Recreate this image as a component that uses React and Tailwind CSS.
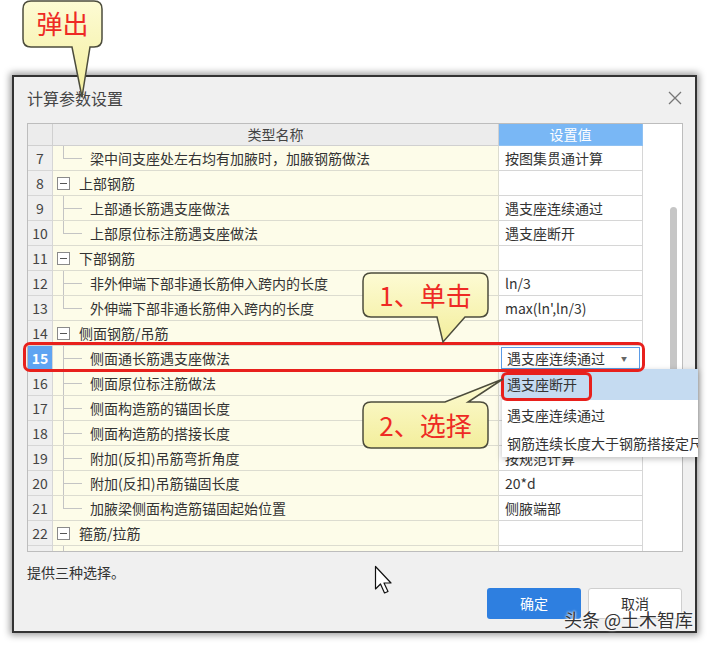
import React from "react";

const rows = [
  { n: 7, name: "梁中间支座处左右均有加腋时，加腋钢筋做法", value: "按图集贯通计算", last: true },
  { n: 8, name: "上部钢筋", group: true },
  { n: 9, name: "上部通长筋遇支座做法", value: "遇支座连续通过" },
  { n: 10, name: "上部原位标注筋遇支座做法", value: "遇支座断开", last: true },
  { n: 11, name: "下部钢筋", group: true },
  { n: 12, name: "非外伸端下部非通长筋伸入跨内的长度", value: "ln/3" },
  { n: 13, name: "外伸端下部非通长筋伸入跨内的长度", value: "max(ln',ln/3)", last: true },
  { n: 14, name: "侧面钢筋/吊筋", group: true },
  { n: 15, name: "侧面通长筋遇支座做法", combo: true },
  { n: 16, name: "侧面原位标注筋做法", value: "" },
  { n: 17, name: "侧面构造筋的锚固长度", value: "" },
  { n: 18, name: "侧面构造筋的搭接长度", value: "" },
  { n: 19, name: "附加(反扣)吊筋弯折角度", value: "按规范计算" },
  { n: 20, name: "附加(反扣)吊筋锚固长度", value: "20*d" },
  { n: 21, name: "加腋梁侧面构造筋锚固起始位置", value: "侧腋端部", last: true },
  { n: 22, name: "箍筋/拉筋", group: true },
];

const Row = ({ row }) => {
  const selected = row.n === 15;
  return (
    <div className="flex h-[25px] shrink-0 text-[14px]">
      <div
        className={
          selected
            ? "w-[25px] border-r border-b border-[#d6d6d6] bg-[#5fa4f2] text-white font-bold flex items-center justify-center"
            : "w-[25px] border-r border-b border-[#d6d6d6] bg-[#efefef] text-[#444] flex items-center justify-center"
        }
      >
        {row.n}
      </div>
      <div className="relative w-[446px] border-r border-b border-[#dcdcd0] bg-[#fdfce9] flex items-center">
        {row.group ? (
          <>
            <div className="absolute left-[4px] top-[6px] w-[13px] h-[13px] border border-[#8a8a8a] bg-white flex items-center justify-center">
              <span className="block w-[7px] h-px bg-[#555]" />
            </div>
            <span className="pl-[26px] text-[#333]">{row.name}</span>
          </>
        ) : (
          <>
            <span
              className={
                row.last
                  ? "absolute left-[10px] top-0 h-[12px] border-l border-[#c4c4c4]"
                  : "absolute left-[10px] top-0 h-full border-l border-[#c4c4c4]"
              }
            />
            <span className="absolute left-[10px] top-[12px] w-[19px] border-t border-[#c4c4c4]" />
            <span className="pl-[37px] text-[#333]">{row.name}</span>
          </>
        )}
      </div>
      <div className="w-[144px] border-r border-b border-[#d6d6d6] bg-white flex items-center">
        {row.combo ? (
          <div className="mx-[2px] h-[22px] w-full border border-[#5b9be6] flex items-center justify-between pl-[5px] pr-[12px]">
            <span>遇支座连续通过</span>
            <span className="text-[6px] text-[#666]">▼</span>
          </div>
        ) : (
          <span className="pl-[6px] text-[#333]">{row.value}</span>
        )}
      </div>
    </div>
  );
};

const App = () => {
  return (
    <div className="relative w-[710px] h-[645px] overflow-hidden bg-white font-['Noto_Sans_CJK_SC',sans-serif] text-[#333]">
      <div className="pt-[75px] pl-[12px]">
        <div className="w-[685px] h-[558px] border-2 border-[#333] bg-[#f0f0f0] shadow-[0_0_7px_2px_rgba(0,0,0,0.4)] flex flex-col">
          <div className="h-[46px] flex items-center justify-between pl-[13px] pr-[13px] pb-[4px]">
            <span className="text-[16px] leading-[22px] text-[#444]">计算参数设置</span>
            <svg width="14" height="14" viewBox="0 0 14 14">
              <path d="M1 1L13 13M13 1L1 13" stroke="#777" strokeWidth="1.3" fill="none" />
            </svg>
          </div>

          <div className="ml-[13px] w-[656px] h-[429px] border border-[#bdbdbd] bg-white flex overflow-hidden">
            <div className="w-[615px] flex flex-col">
              <div className="flex h-[22px] shrink-0 text-[14px]">
                <div className="w-[25px] border-r border-b border-[#d0d0d0] bg-[#ececec]" />
                <div className="w-[446px] border-r border-b border-[#d0d0d0] bg-[#ececec] flex items-center justify-center text-[#444]">
                  类型名称
                </div>
                <div className="w-[144px] border-r border-b border-[#8fc1f2] bg-[#79b7f5] flex items-center justify-center text-white">
                  设置值
                </div>
              </div>
              {rows.map((row) => (
                <Row key={row.n} row={row} />
              ))}
              <div className="flex h-[5px] shrink-0">
                <div className="w-[25px] border-r border-[#d6d6d6] bg-[#efefef]" />
                <div className="relative w-[446px] border-r border-[#dcdcd0] bg-[#fdfce9]">
                  <span className="absolute left-[10px] top-0 h-full border-l border-[#c4c4c4]" />
                </div>
                <div className="w-[144px] border-r border-[#d6d6d6] bg-white" />
              </div>
            </div>
            <div className="relative flex-1 bg-white">
              <div className="absolute left-[27px] top-[83px] w-[7px] h-[190px] rounded-full bg-[#c6c6c6]" />
            </div>
          </div>

          <div className="px-[13px]">
            <p className="mt-[10px] text-[14px] leading-[20px] text-[#333]">提供三种选择。</p>
            <div className="mt-[6px] flex justify-end gap-[7px]">
              <button className="w-[94px] h-[31px] rounded-[3px] bg-[#2e7fe0] text-white text-[14px]">确定</button>
              <button className="w-[94px] h-[31px] rounded-[3px] border border-[#cfcfcf] bg-white text-[14px] text-[#333]">取消</button>
            </div>
          </div>
        </div>
      </div>

      {/* dropdown list */}
      <div className="absolute left-[502px] top-[369px] w-[196px] h-[88px] bg-white shadow-[0_2px_6px_rgba(0,0,0,0.25)] overflow-hidden text-[14px] text-[#333] whitespace-nowrap">
        <div className="h-[31px] bg-[#c5dbf1] flex items-center pl-[5px]">遇支座断开</div>
        <div className="h-[30px] flex items-center pl-[5px]">遇支座连续通过</div>
        <div className="h-[27px] flex items-center pl-[5px]">钢筋连续长度大于钢筋搭接定尺</div>
      </div>

      {/* red highlights */}
      <div className="absolute left-[23px] top-[342px] w-[622px] h-[30px] border-[3px] border-[#e8201c] rounded-[7px]" />
      <div className="absolute left-[501px] top-[372px] w-[91px] h-[29px] border-[3px] border-[#e8201c] rounded-[6px]" />

      {/* callouts */}
      <svg className="absolute left-0 top-0 pointer-events-none" width="710" height="645">
        <defs>
          <linearGradient id="cg" x1="0" y1="0" x2="0" y2="1">
            <stop offset="0" stopColor="#fdfbd4" />
            <stop offset="1" stopColor="#f3ee9c" />
          </linearGradient>
        </defs>
        <path
          d="M31 1H94Q102 1 102 9V39Q102 47 94 47H90L82 97L72 47H31Q23 47 23 39V9Q23 1 31 1Z"
          fill="url(#cg)"
          stroke="#4c4c3c"
          strokeWidth="1.5"
        />
        <path
          d="M371 273H480Q488 273 488 281V309Q488 317 480 317H465L443 342L437 317H371Q363 317 363 309V281Q363 273 371 273Z"
          fill="url(#cg)"
          stroke="#4c4c3c"
          strokeWidth="1.5"
        />
        <path
          d="M371 402H445L503 379L468 402H480Q488 402 488 410V440Q488 448 480 448H371Q363 448 363 440V410Q363 402 371 402Z"
          fill="url(#cg)"
          stroke="#4c4c3c"
          strokeWidth="1.5"
        />
        <path
          d="M375.5 566.5V589L380.5 584L384.5 593L388 591.5L384 583H391Z"
          fill="#fff"
          stroke="#111"
          strokeWidth="1.2"
          strokeLinejoin="round"
        />
      </svg>
      <span className="absolute left-[23px] top-[6px] w-[79px] text-center text-[26px] leading-[34px] text-[#ee2a24]">弹出</span>
      <span className="absolute left-[363px] top-[278px] w-[125px] text-center text-[26px] leading-[34px] text-[#ee2a24]">1、单击</span>
      <span className="absolute left-[363px] top-[408px] w-[125px] text-center text-[26px] leading-[34px] text-[#ee2a24]">2、选择</span>

      <span className="absolute left-[564px] top-[606px] text-[18px] leading-[26px] text-[#333] [text-shadow:0_0_2px_#fff,0_0_3px_#fff] whitespace-nowrap">
        头条 @土木智库
      </span>
    </div>
  );
};

export default App;
